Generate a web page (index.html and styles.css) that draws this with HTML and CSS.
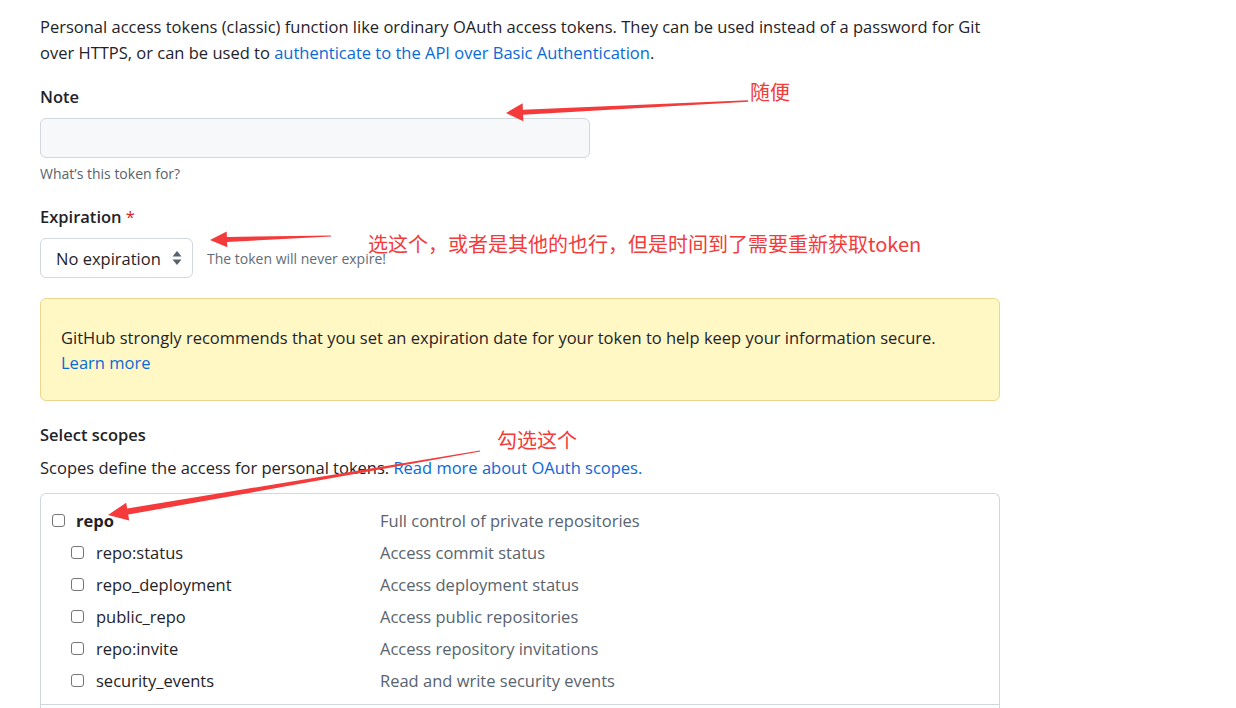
FILE: index.html
```html
<!DOCTYPE html>
<html lang="en">
<head>
<meta charset="utf-8">
<title>New personal access token (classic)</title>
<link rel="stylesheet" href="styles.css">
</head>
<body>
<div class="page">
  <p class="intro">Personal access tokens (classic) function like ordinary OAuth access tokens. They can be used instead of a password for Git over HTTPS, or can be used to <a href="#">authenticate to the API over Basic Authentication</a>.</p>

  <div class="field field-note">
    <label class="label">Note</label>
    <div class="input"></div>
    <p class="hint">What’s this token for?</p>
  </div>

  <div class="field field-exp">
    <label class="label">Expiration <span class="req">*</span></label>
    <div class="select-row">
      <div class="select">
        <span>No expiration</span>
        <svg class="updown" width="10" height="16" viewBox="0 0 10 16"><path d="M5 1 L9.5 6.5 H0.5 Z M5 15 L9.5 9.5 H0.5 Z" fill="#59636e"/></svg>
      </div>
      <span class="select-note">The token will never expire!</span>
    </div>
  </div>

  <div class="flash">
    GitHub strongly recommends that you set an expiration date for your token to help keep your information secure.<br>
    <a href="#">Learn more</a>
  </div>

  <div class="scopes-head">
    <h3 class="label">Select scopes</h3>
    <p class="scopes-desc">Scopes define the access for personal tokens. <a href="#">Read more about OAuth scopes.</a></p>
  </div>

  <div class="scopes">
    <div class="row row-main"><span class="name"><span class="cb"></span><b>repo</b></span><span class="desc">Full control of private repositories</span></div>
    <div class="row row-sub"><span class="name"><span class="cb"></span>repo:status</span><span class="desc">Access commit status</span></div>
    <div class="row row-sub"><span class="name"><span class="cb"></span>repo_deployment</span><span class="desc">Access deployment status</span></div>
    <div class="row row-sub"><span class="name"><span class="cb"></span>public_repo</span><span class="desc">Access public repositories</span></div>
    <div class="row row-sub"><span class="name"><span class="cb"></span>repo:invite</span><span class="desc">Access repository invitations</span></div>
    <div class="row row-sub"><span class="name"><span class="cb"></span>security_events</span><span class="desc">Read and write security events</span></div>
    <div class="divider"></div>
  </div>
</div>

<div class="notes">
  <span class="note-text n1">随便</span>
  <span class="note-text n2">选这个，或者是其他的也行，但是时间到了需要重新获取token</span>
  <span class="note-text n3">勾选这个</span>
  <svg class="arrows" width="1236" height="708" viewBox="0 0 1236 708">
    <polygon fill="#f43a3a" points="748,100.3 522.9,109.7 522.6,103.2 506,113 523.4,121.2 523.1,114.7 748,101.7"/>
    <polygon fill="#f43a3a" points="331,235.4 226.9,236.9 226.7,231.6 210,240 227.3,247.2 227.1,241.9 331,236.6"/>
    <polygon fill="#f43a3a" points="480,450.4 127.2,508.6 126.2,502.7 108,515 129.2,520.5 128.2,514.6 480.2,451.6"/>
  </svg>
</div>
</body>
</html>
```

FILE: styles.css
```css
* { box-sizing: border-box; }

html, body {
  margin: 0;
  padding: 0;
  background: #ffffff;
}

body {
  font-family: "Open Sans", "Noto Sans", "Liberation Sans", sans-serif;
  font-size: 16.5px;
  color: #1f2328;
  width: 1236px;
  height: 708px;
  overflow: hidden;
  position: relative;
}

a {
  color: #0969da;
  text-decoration: none;
}

.page {
  padding-left: 40px;
  width: 1000px;
}

.intro {
  margin: 14px 0 0;
  line-height: 26px;
  width: 960px;
}

.label {
  display: block;
  margin: 0;
  font-size: 16.5px;
  font-weight: 600;
  line-height: 24px;
}

.req { color: #d1242f; font-weight: 400; }

.field-note { margin-top: 19px; }

.input {
  margin-top: 9px;
  width: 550px;
  height: 40px;
  background: #f6f8fa;
  border: 1px solid #d0d7de;
  border-radius: 6px;
}

.hint {
  margin: 7px 0 0;
  font-size: 14px;
  line-height: 18px;
  color: #59636e;
}

.field-exp { margin-top: 22px; }

.select-row {
  margin-top: 9px;
  display: flex;
  align-items: center;
  gap: 14px;
}

.select {
  width: 153px;
  height: 40px;
  border: 1px solid #d0d7de;
  border-radius: 6px;
  background: #ffffff;
  display: flex;
  align-items: center;
  justify-content: space-between;
  padding: 0 10px 0 15px;
  font-size: 16.5px;
}

.select span { padding-top: 1px; }

.select-note {
  font-size: 14px;
  color: #636c76;
  padding-top: 1px;
}

.flash {
  margin-top: 20px;
  width: 960px;
  background: #fff8c5;
  border: 1px solid #ecd68e;
  border-radius: 6px;
  padding: 26px 20px 25px;
  line-height: 25px;
}

.scopes-head { margin-top: 22px; }

.scopes-desc {
  margin: 9px 0 0;
  line-height: 24px;
}

.scopes {
  margin-top: 13px;
  width: 960px;
  border: 1px solid #d0d7de;
  border-bottom: none;
  border-radius: 6px 6px 0 0;
  padding-top: 10px;
  height: 230px;
}

.row {
  display: grid;
  grid-template-columns: 328px 1fr;
  align-items: center;
  height: 32px;
  padding-left: 11px;
}

.row:last-of-type { height: 31px; }

.name {
  display: flex;
  align-items: center;
}

.row-sub .name { padding-left: 19px; }

.row-main b { font-weight: 700; font-size: 16.5px; }

.cb {
  width: 13px;
  height: 13px;
  border: 1px solid #767676;
  border-radius: 3px;
  margin-right: 11px;
  flex: none;
}

.row-sub .cb { margin-right: 12px; }

.desc { color: #59636e; }

.divider {
  margin-top: 8px;
  border-top: 1px solid #d0d7de;
}

.notes {
  position: absolute;
  inset: 0;
  pointer-events: none;
}

.arrows {
  position: absolute;
  left: 0;
  top: 0;
}

.note-text {
  position: absolute;
  font-family: "Noto Sans CJK SC", sans-serif;
  font-size: 20px;
  line-height: 24px;
  color: #f43a3a;
  white-space: nowrap;
}

.n1 { left: 750px; top: 80px; }
.n2 { left: 368px; top: 232px; }
.n3 { left: 497px; top: 428px; }
```
